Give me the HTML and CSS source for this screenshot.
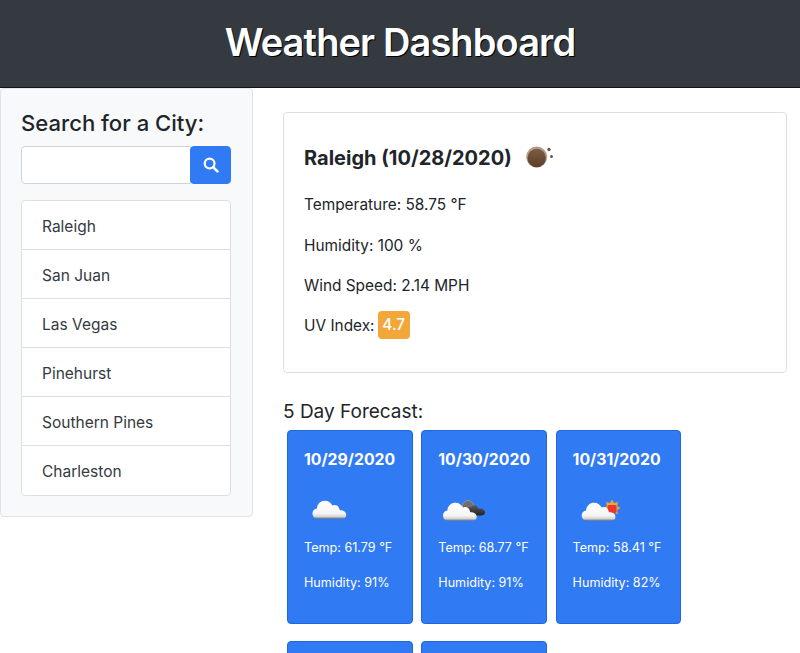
FILE: index.html
```html
<!DOCTYPE html>
<html lang="en">
<head>
<meta charset="UTF-8" />
<meta name="viewport" content="width=device-width, initial-scale=1" />
<title>Weather Dashboard</title>
<link rel="stylesheet" href="styles.css">
</head>
<body>

<header class="banner">
  <h1>Weather Dashboard</h1>
</header>

<svg class="defs" width="0" height="0" aria-hidden="true">
  <defs>
    <linearGradient id="cloudWhite" x1="0" y1="0" x2="0" y2="1">
      <stop offset="0" stop-color="#ffffff" />
      <stop offset="0.7" stop-color="#f6f6f6" />
      <stop offset="0.88" stop-color="#d5d5d5" />
      <stop offset="1" stop-color="#77736f" />
    </linearGradient>
    <linearGradient id="cloudDark" x1="0" y1="0" x2="0" y2="1">
      <stop offset="0" stop-color="#5c5c5c" />
      <stop offset="1" stop-color="#222222" />
    </linearGradient>
    <linearGradient id="moonBrown" x1="0" y1="0" x2="0" y2="1">
      <stop offset="0" stop-color="#7d5c42" />
      <stop offset="1" stop-color="#5a3e2a" />
    </linearGradient>
    <path id="cloudShape" d="M6 24 C1.5 24 0 21 0 18.5 C0 15.5 2 13.6 4.6 13.2 C5 8 8.6 5 13 5 C17 5 19.6 7.2 21 10 C23.4 8.6 27 9.6 28 12.8 C28.4 14 28.6 14.6 29 15 C33 15 35.5 17 35.5 20 C35.5 22.4 34 24 31 24 Z" />
  </defs>
</svg>

<div class="layout">
  <aside class="sidebar">
    <h2 class="search-title">Search for a City:</h2>
    <form class="search-group">
      <input class="search-input" type="text" />
      <button class="search-btn" type="button" aria-label="Search">
        <svg width="16" height="16" viewBox="0 0 16 16">
          <circle cx="6.6" cy="6.6" r="4.9" fill="none" stroke="#fff" stroke-width="2.2" />
          <path d="M10.4 10.4 L14.4 14.4" stroke="#fff" stroke-width="2.6" stroke-linecap="round" />
        </svg>
      </button>
    </form>
    <ul class="city-list">
      <li>Raleigh</li>
      <li>San Juan</li>
      <li>Las Vegas</li>
      <li>Pinehurst</li>
      <li>Southern Pines</li>
      <li>Charleston</li>
    </ul>
  </aside>

  <main class="content">
    <section class="current">
      <h3 class="current-title">
        Raleigh (10/28/2020)
        <svg class="current-icon" width="30" height="24" viewBox="0 0 30 24">
          <circle cx="11.7" cy="12" r="10.5" fill="#b39d89" />
          <circle cx="11.7" cy="13" r="9.2" fill="url(#moonBrown)" />
          <circle cx="24" cy="4.5" r="1.7" fill="#6b5544" />
          <circle cx="26.5" cy="11.5" r="1.5" fill="#6b5544" />
        </svg>
      </h3>
      <p>Temperature: 58.75 °F</p>
      <p>Humidity: 100 %</p>
      <p>Wind Speed: 2.14 MPH</p>
      <p class="uv-row">UV Index: <span class="uv-badge">4.7</span></p>
    </section>

    <h4 class="forecast-title">5 Day Forecast:</h4>
    <div class="forecast">
      <article class="day">
        <h5>10/29/2020</h5>
        <svg class="day-icon" width="50" height="50" viewBox="0 0 50 50">
          <use href="#cloudShape" transform="translate(8.5 13) scale(0.95)" fill="url(#cloudWhite)" />
        </svg>
        <p>Temp: 61.79 °F</p>
        <p>Humidity: 91%</p>
      </article>
      <article class="day">
        <h5>10/30/2020</h5>
        <svg class="day-icon" width="50" height="50" viewBox="0 0 50 50">
          <circle cx="30" cy="23" r="5.5" fill="#6e6e6e" stroke="#9a9a9a" stroke-width="0.8" />
          <path d="M30 32.5 C27 32.5 26 30 26.5 28 C27 25 30 23.5 33 24.5 C35 21 39 21.5 40.5 25.5 C44 25 47 27 47 29.5 C47 31.5 45 32.5 43 32.5 Z" fill="url(#cloudDark)" />
          <use href="#cloudShape" transform="translate(5 15) scale(0.95)" fill="url(#cloudWhite)" />
        </svg>
        <p>Temp: 68.77 °F</p>
        <p>Humidity: 91%</p>
      </article>
      <article class="day">
        <h5>10/31/2020</h5>
        <svg class="day-icon" width="50" height="50" viewBox="0 0 50 50">
          <polygon points="47.5,25 44.1,27.1 45,31 41.1,30.1 39,33.5 36.9,30.1 33,31 33.9,27.1 30.5,25 33.9,22.9 33,19 36.9,19.9 39,16.5 41.1,19.9 45,19 44.1,22.9" fill="#f0a33a" />
          <rect x="34.5" y="22" width="9" height="8" rx="1.5" fill="#e8392c" />
          <use href="#cloudShape" transform="translate(8.7 15) scale(0.95)" fill="url(#cloudWhite)" />
        </svg>
        <p>Temp: 58.41 °F</p>
        <p>Humidity: 82%</p>
      </article>
      <article class="day"></article>
      <article class="day"></article>
    </div>
  </main>
</div>

</body>
</html>
```

FILE: styles.css
```css
* {
  box-sizing: border-box;
}

body {
  font-family: Inter, 'Noto Sans', sans-serif;
  font-size: 16px;
  line-height: 24px;
  color: #212529;
  background: #fff;
  margin: 0;
  height: 653px;
  overflow: hidden;
}

.defs {
  display: block;
  height: 0;
}

.banner {
  height: 88px;
  background: #343a40;
  border-bottom: 1px solid #111;
  display: flex;
  align-items: center;
  justify-content: center;
}

.banner h1 {
  margin: 0 0 1px;
  font-size: 38px;
  font-weight: 600;
  line-height: 1.2;
  letter-spacing: -0.9px;
  color: #fff;
  text-shadow: 1px 1px 0 #000;
}

.layout {
  display: flex;
  align-items: flex-start;
}

/* Sidebar */
.sidebar {
  width: 253px;
  flex: none;
  padding: 21px 21px 20px 20px;
  background: #f8f9fa;
  border: 1px solid #dfe3e7;
  border-radius: 4px;
}

.search-title {
  margin: 0 0 9px;
  font-size: 22.1px;
  font-weight: 500;
  line-height: 1.2;
  color: #212529;
}

.search-group {
  display: flex;
  height: 38px;
  margin-bottom: 16px;
}

.search-input {
  flex: 1;
  min-width: 0;
  background: #fff;
  border: 1px solid #ced4da;
  border-radius: 4px 0 0 4px;
}

.search-btn {
  width: 41px;
  margin-left: -1px;
  padding: 0;
  background: #307af3;
  border: 1px solid #307af3;
  border-radius: 4px;
  display: flex;
  align-items: center;
  justify-content: center;
}

.city-list {
  list-style: none;
  margin: 0;
  padding: 0;
  background: #fff;
  border: 1px solid #dfdfdf;
  border-radius: 4px;
}

.city-list li {
  height: 49px;
  padding: 14px 20px 10px;
  color: #343a40;
  font-size: 15.5px;
  border-bottom: 1px solid #dfdfdf;
}

.city-list li:last-child {
  border-bottom: none;
}

/* Current weather */
.content {
  flex: 1;
  min-width: 0;
  padding: 24px 13px 0 30px;
}

.current {
  height: 261px;
  padding: 20px;
  border: 1px solid #dfdfdf;
  border-radius: 4px;
}

.current-title {
  display: flex;
  align-items: center;
  height: 48px;
  padding-top: 2px;
  margin: 0 0 12px;
  font-size: 20px;
  font-weight: 700;
  color: #212529;
}

.current-icon {
  margin-left: 13px;
  margin-top: -2px;
}

.current p {
  margin: 0 0 16.5px;
  font-size: 15.4px;
  color: #212529;
}

.uv-badge {
  display: inline-block;
  height: 28px;
  padding: 0 4.5px;
  margin-left: -1px;
  background: #f3a73b;
  border-radius: 4px;
  color: #fff;
  font-weight: 500;
  line-height: 28px;
  vertical-align: 1px;
}

.current .uv-row {
  margin-top: -4px;
}

/* Forecast */
.forecast-title {
  margin: 28px 0 4px;
  font-size: 19px;
  font-weight: 400;
  line-height: 1.2;
  color: #212529;
}

.forecast {
  display: grid;
  grid-template-columns: repeat(3, 125.5px);
  column-gap: 8.8px;
  row-gap: 17px;
  padding: 2px 0 0 4px;
}

.day {
  height: 194px;
  padding: 16px;
  background: #307af3;
  border: 1px solid #1f68dc;
  border-radius: 4px;
  color: #fff;
}

.day h5 {
  margin: 1px 0 11px;
  font-size: 15.8px;
  font-weight: 700;
  line-height: 24px;
}

.day-icon {
  display: block;
  margin-bottom: 5px;
}

.day p {
  margin: 0 0 16px;
  font-size: 12.6px;
  line-height: 19px;
}
```
